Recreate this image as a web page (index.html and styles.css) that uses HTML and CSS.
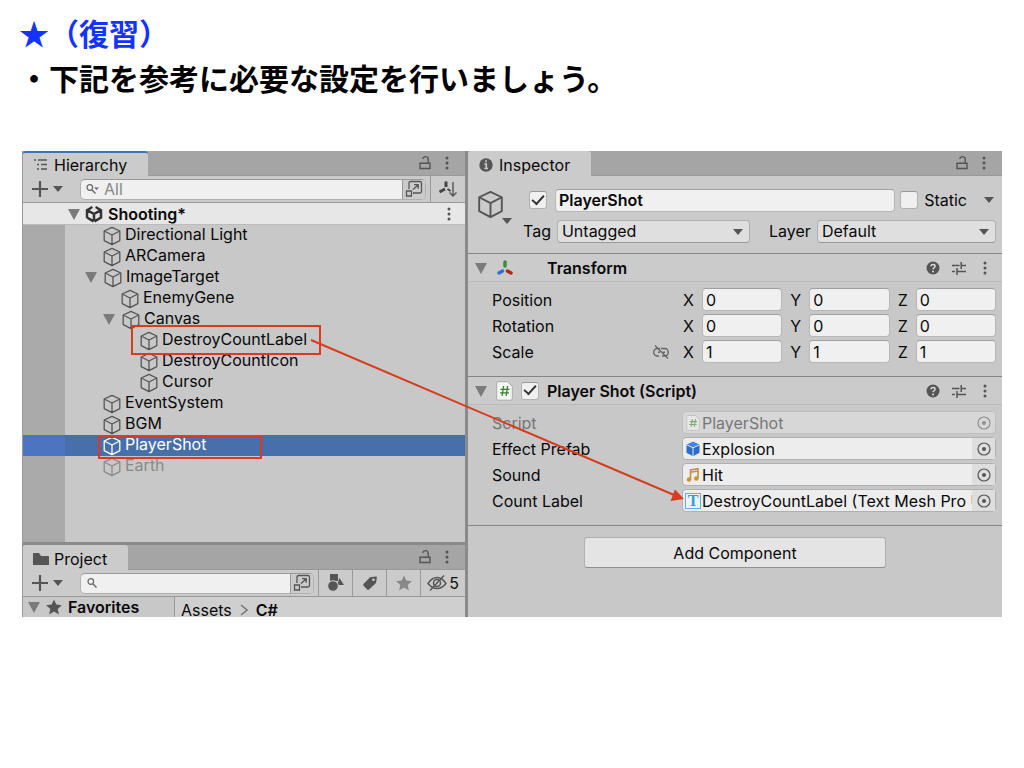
FILE: index.html
```html
<!DOCTYPE html>
<html lang="ja">
<head>
<meta charset="utf-8">
<title>復習</title>
<link rel="stylesheet" href="styles.css">
</head>
<body>
<svg class="defs" aria-hidden="true">
  <symbol id="cube" viewBox="0 0 20 20"><path d="M10 1.3 17.8 5v9.6L10 18.7 2.2 14.6V5zM2.2 5 10 9l7.8-4M10 9v9.7" fill="none" stroke="currentColor" stroke-width="1.3" stroke-linejoin="round"/></symbol>
  <symbol id="lock" viewBox="0 0 14 16"><path d="M2 8.2h10v5.3H2zM10.200 8V4.600a2.700 2.700 0 0 0-5.400-.6" fill="none" stroke="currentColor" stroke-width="1.400"/></symbol>
  <symbol id="dots" viewBox="0 0 6 16"><g fill="currentColor"><circle cx="3" cy="3" r="1.500"/><circle cx="3" cy="8" r="1.500"/><circle cx="3" cy="13" r="1.500"/></g></symbol>
  <symbol id="plus" viewBox="0 0 16 16"><path d="M8 0v16M0 8h16" stroke="currentColor" stroke-width="2.200"/></symbol>
  <symbol id="down" viewBox="0 0 12 8"><path d="M1 1h10L6 7z" fill="currentColor"/></symbol>
  <symbol id="fold" viewBox="0 0 12 12"><path d="M0 1h12L6 12z" fill="currentColor"/></symbol>
  <symbol id="expand" viewBox="0 0 18 18"><path d="M4 9V3q0-1.500 1.500-1.500h9.500q1.500 0 1.500 1.500v8.500q0 1.500-1.500 1.500H8M1.500 11h5v5h-5zM8 9.500 13 5M9 4.700h4.200v4" fill="none" stroke="currentColor" stroke-width="1.300"/></symbol>
  <symbol id="star" viewBox="0 0 16 16"><path d="m8 .5 2.300 5.100 5.500.6-4.100 3.700 1.200 5.500L8 12.600l-4.900 2.800 1.200-5.500L.2 6.200l5.500-.6z" fill="currentColor"/></symbol>
  <symbol id="help" viewBox="0 0 14 14"><circle cx="7" cy="7" r="6.500" fill="#555"/><path d="M5 5.300c.1-2.500 4.200-2.400 4.100 0C9.100 6.800 7 6.700 7 8.300" fill="none" stroke="#ddd" stroke-width="1.500"/><circle cx="7" cy="10.500" r="1" fill="#ddd"/></symbol>
  <symbol id="sliders" viewBox="0 0 14 14"><path d="M0 4.500h7.500M9 4.500h5M9.200 1v7M0 10.500h3M5.500 10.500H14M5 7v7" fill="none" stroke="currentColor" stroke-width="1.500"/></symbol>
  <symbol id="target" viewBox="0 0 14 14"><circle cx="7" cy="7" r="6" fill="none" stroke="currentColor" stroke-width="1.200"/><circle cx="7" cy="7" r="2" fill="currentColor"/></symbol>
  <symbol id="page" viewBox="0 0 17 20"><path d="M2 .7h9.500l4.800 4.600v12.400q0 1.500-1.500 1.500H2Q.7 19.200.7 17.700V2Q.7.7 2 .7z" fill="#f5f5f5" stroke="#aaa"/><path d="m7.600 5-1.500 10M11.600 5l-1.500 10M4.500 8.300h9M4 11.800h9" fill="none" stroke="#3a8030" stroke-width="1.300"/></symbol>
</svg>

<header class="heading">
  <h1>★（復習）</h1>
  <p>・下記を参考に必要な設定を行いましょう。</p>
</header>

<main class="editor">
  <div class="left">
    <section class="hierarchy">
      <div class="tabbar">
        <h2 class="tab active"><svg class="i16" viewBox="0 0 16 16"><path d="M1 3h2M5 3h9M4 7.500h2M8 7.500h6M4 12h2M8 12h6" stroke="#555" stroke-width="1.400"/></svg>Hierarchy</h2>
        <button class="icon" aria-label="Lock"><svg class="lock"><use href="#lock"/></svg></button>
        <button class="icon" aria-label="Menu"><svg class="dots"><use href="#dots"/></svg></button>
      </div>
      <div class="toolbar">
        <button class="icon add" aria-label="Create"><svg class="i16"><use href="#plus"/></svg><svg class="down"><use href="#down"/></svg></button>
        <div class="search">
          <svg class="glass" viewBox="0 0 14 12"><path d="m5.500 6.500 4 4" stroke="#666" stroke-width="1.400"/><circle cx="3.800" cy="4.500" r="2.800" fill="none" stroke="#666" stroke-width="1.200"/><path d="M8 4.500h5L10.500 7z" fill="#666"/></svg>
          <input type="text" placeholder="All" aria-label="Search hierarchy">
          <button class="icon expand" aria-label="Open search"><svg class="i18"><use href="#expand"/></svg></button>
        </div>
        <button class="icon cell sort" aria-label="Sort"><svg class="i20" viewBox="0 0 20 20"><path d="M8 2.500V8" stroke="#444" stroke-width="3"/><path d="M7 10 1.500 13" stroke="#444" stroke-width="3"/><path d="m9.500 10 3 2" stroke="#444" stroke-width="2"/><path d="M15 3v14M11.500 13.500 15 17l3.500-3.500" fill="none" stroke="#555" stroke-width="1.400"/></svg></button>
      </div>
      <div class="scene">
        <svg class="fold"><use href="#fold"/></svg>
        <svg class="i18" viewBox="0 0 18 18"><path d="M7.500 2.200 2 5.200v7.500M2 12.500l6.500 3.800M9.500 16.300l6.500-3.800V5.200L10.500 2.200M9 9v7.500M9 9 2.500 5.300M9 9l6.500-3.700" fill="none" stroke="#333" stroke-width="2.500"/><path d="m9 2.500 3.500 2L9 6.500l-3.500-2z" fill="#e6e6e6"/></svg>
        <strong>Shooting*</strong>
        <button class="icon" aria-label="Scene menu"><svg class="dots"><use href="#dots"/></svg></button>
      </div>
      <ul class="tree">
        <li><svg class="cube"><use href="#cube"/></svg>Directional Light</li>
        <li><svg class="cube"><use href="#cube"/></svg>ARCamera</li>
        <li class="open"><svg class="fold"><use href="#fold"/></svg><svg class="cube"><use href="#cube"/></svg>ImageTarget</li>
        <li class="level2"><svg class="cube"><use href="#cube"/></svg>EnemyGene</li>
        <li class="level2 open"><svg class="fold"><use href="#fold"/></svg><svg class="cube"><use href="#cube"/></svg>Canvas</li>
        <li class="level3"><svg class="cube"><use href="#cube"/></svg>DestroyCountLabel<span class="mark mark-label"></span></li>
        <li class="level3"><svg class="cube"><use href="#cube"/></svg>DestroyCountIcon</li>
        <li class="level3"><svg class="cube"><use href="#cube"/></svg>Cursor</li>
        <li><svg class="cube"><use href="#cube"/></svg>EventSystem</li>
        <li><svg class="cube"><use href="#cube"/></svg>BGM</li>
        <li class="selected"><svg class="cube"><use href="#cube"/></svg>PlayerShot<span class="mark mark-shot"></span></li>
        <li class="inactive"><svg class="cube"><use href="#cube"/></svg>Earth</li>
      </ul>
    </section>
    <section class="project">
      <div class="tabbar">
        <h2 class="tab"><svg class="i16" viewBox="0 0 16 16"><path d="M0 3q0-1 1-1h5l2 3h7q1 0 1 1v8H0z" fill="#555"/></svg>Project</h2>
        <button class="icon" aria-label="Lock"><svg class="lock"><use href="#lock"/></svg></button>
        <button class="icon" aria-label="Menu"><svg class="dots"><use href="#dots"/></svg></button>
      </div>
      <div class="toolbar">
        <button class="icon add" aria-label="Create"><svg class="i16"><use href="#plus"/></svg><svg class="down"><use href="#down"/></svg></button>
        <div class="search">
          <svg class="glass" viewBox="0 0 14 12"><path d="m6.500 6.500 4 4" stroke="#666" stroke-width="1.400"/><circle cx="4.800" cy="4.500" r="2.800" fill="none" stroke="#666" stroke-width="1.200"/></svg>
          <input type="text" aria-label="Search project">
          <button class="icon expand" aria-label="Open search"><svg class="i18"><use href="#expand"/></svg></button>
        </div>
        <button class="icon cell" aria-label="Filter by type"><svg class="i18" viewBox="0 0 18 18"><path d="M3 0h8v7H3zM12.500 4l4.500 7h-7z" fill="#555"/><circle cx="6" cy="12" r="5.300" fill="#555" stroke="#cbcbcb"/></svg></button>
        <button class="icon cell" aria-label="Filter by label"><svg class="i16" viewBox="0 0 16 16"><path d="M1.500 9 8 2.200 14 1.500q1 0 .9 1L14 8l-7 6.500q-1 .8-1.800 0L1.500 10.800q-.8-.9 0-1.800z" fill="#555"/><circle cx="11.500" cy="4.700" r="1.300" fill="#cbcbcb"/></svg></button>
        <button class="icon cell pale" aria-label="Favorite"><svg class="i16"><use href="#star"/></svg></button>
        <button class="icon cell hidden-count"><svg class="i20" viewBox="0 0 20 16"><path d="M1 8.500q4-6 9-6t9 6q-4 5-9 5t-9-5zM3 15.500 17 .5" fill="none" stroke="#555" stroke-width="1.400"/><circle cx="10" cy="8" r="3.500" fill="none" stroke="#555" stroke-width="1.500"/></svg>5</button>
      </div>
      <div class="browser">
        <div class="favorites"><svg class="fold"><use href="#fold"/></svg><svg class="i16"><use href="#star"/></svg><strong>Favorites</strong></div>
        <div class="crumbs"><span>Assets</span><svg class="chevron" viewBox="0 0 8 12"><path d="m1 1 6 5-6 5" fill="none" stroke="#777" stroke-width="1.500"/></svg><strong>C#</strong></div>
      </div>
    </section>
  </div>

  <section class="inspector">
    <div class="tabbar">
      <h2 class="tab"><svg class="i16" viewBox="0 0 16 16"><circle cx="8" cy="8" r="6.700" fill="#555"/><path d="M8 3.300v2M6.300 7H8.300v4.500M6.300 11.500h3.700" fill="none" stroke="#ccc" stroke-width="1.600"/></svg>Inspector</h2>
      <button class="icon" aria-label="Lock"><svg class="lock"><use href="#lock"/></svg></button>
      <button class="icon" aria-label="Menu"><svg class="dots"><use href="#dots"/></svg></button>
    </div>
    <div class="object">
      <div class="object-icon"><svg class="bigcube"><use href="#cube"/></svg><svg class="down"><use href="#down"/></svg></div>
      <div class="object-fields">
        <div class="line">
          <input type="checkbox" checked aria-label="Active">
          <input class="name" type="text" value="PlayerShot" aria-label="Name">
          <input type="checkbox" id="static"><label for="static">Static</label>
          <button class="icon static-menu" aria-label="Static options"><svg class="down"><use href="#down"/></svg></button>
        </div>
        <div class="line">
          <label for="tag">Tag</label><span class="select tag"><select id="tag"><option>Untagged</option></select></span>
          <label class="layer-label" for="layer">Layer</label><span class="select layer"><select id="layer"><option>Default</option></select></span>
        </div>
      </div>
    </div>
    <section class="component">
      <div class="component-head">
        <svg class="fold"><use href="#fold"/></svg>
        <svg class="i18" viewBox="0 0 18 18"><g stroke-width="3.500" stroke-linecap="round"><path d="M9 3v4" stroke="#3b8b3b"/><path d="M6.500 12 3 14" stroke="#2f6fd0"/><path d="m11.500 12 3.500 2" stroke="#b3261c"/></g></svg>
        <h3>Transform</h3>
        <button class="icon" aria-label="Help"><svg class="i14"><use href="#help"/></svg></button>
        <button class="icon" aria-label="Presets"><svg class="i14"><use href="#sliders"/></svg></button>
        <button class="icon" aria-label="Menu"><svg class="dots"><use href="#dots"/></svg></button>
      </div>
      <div class="rows">
        <div class="row"><span>Position</span><div class="vector"><label for="px">X</label><input id="px" type="text" value="0"><label for="py">Y</label><input id="py" type="text" value="0"><label for="pz">Z</label><input id="pz" type="text" value="0"></div></div>
        <div class="row"><span>Rotation</span><div class="vector"><label for="rx">X</label><input id="rx" type="text" value="0"><label for="ry">Y</label><input id="ry" type="text" value="0"><label for="rz">Z</label><input id="rz" type="text" value="0"></div></div>
        <div class="row"><span class="scale">Scale<svg class="i18" viewBox="0 0 18 18"><path d="M8 5.500H5.500a3.700 3.700 0 0 0 0 7.500H7M10 13h2.500a3.700 3.700 0 0 0 0-7.500H9M6 9.200h2M11 9.200h2M3 2.500l13 13" fill="none" stroke="#666" stroke-width="1.400"/></svg></span><div class="vector"><label for="sx">X</label><input id="sx" type="text" value="1"><label for="sy">Y</label><input id="sy" type="text" value="1"><label for="sz">Z</label><input id="sz" type="text" value="1"></div></div>
      </div>
    </section>
    <section class="component script">
      <div class="component-head">
        <svg class="fold"><use href="#fold"/></svg>
        <svg class="page"><use href="#page"/></svg>
        <input type="checkbox" checked aria-label="Player Shot enabled">
        <h3>Player Shot (Script)</h3>
        <button class="icon" aria-label="Help"><svg class="i14"><use href="#help"/></svg></button>
        <button class="icon" aria-label="Presets"><svg class="i14"><use href="#sliders"/></svg></button>
        <button class="icon" aria-label="Menu"><svg class="dots"><use href="#dots"/></svg></button>
      </div>
      <div class="rows">
        <div class="row disabled"><span>Script</span><div class="object-field"><svg class="i16" viewBox="0 0 17 20"><use href="#page" width="17" height="20"/></svg><span class="value">PlayerShot</span><button class="icon pick" disabled aria-label="Pick script"><svg class="i14"><use href="#target"/></svg></button></div></div>
        <div class="row"><span>Effect Prefab</span><div class="object-field"><svg class="i16" viewBox="0 0 16 16"><path d="m8 .8 6.500 3v8L8 15.300l-6.500-3.500v-8z" fill="#2d6bc9"/><path d="m8 .8 6.500 3L8 7 1.500 3.800z" fill="#4784dc"/><path d="m1.500 3.800 6.500 3 6.500-3M8 7v8" fill="none" stroke="#d7e7ff"/></svg><span class="value">Explosion</span><button class="icon pick" aria-label="Pick prefab"><svg class="i14"><use href="#target"/></svg></button></div></div>
        <div class="row"><span>Sound</span><div class="object-field"><svg class="i16" viewBox="0 0 16 16"><path d="M5.500 12.500V3l7.500-1.200v9.500M5.500 5.200 13 4" fill="none" stroke="#c4952f" stroke-width="1.600"/><circle cx="4" cy="12.500" r="2.200" fill="#c4952f"/><circle cx="11.300" cy="11.500" r="2.200" fill="#c4952f"/></svg><span class="value">Hit</span><button class="icon pick" aria-label="Pick sound"><svg class="i14"><use href="#target"/></svg></button></div></div>
        <div class="row"><span>Count Label</span><div class="object-field"><span class="text-icon">T</span><span class="value">DestroyCountLabel (Text Mesh Pro UGUI)</span><button class="icon pick" aria-label="Pick label"><svg class="i14"><use href="#target"/></svg></button></div></div>
      </div>
    </section>
    <div class="footer"><button class="add-component">Add Component</button></div>
  </section>

  <svg class="arrow" viewBox="0 0 980 466" aria-hidden="true"><path d="M289 189 652 344" stroke="#d73c1e" stroke-width="2"/><path d="m662 348-13.500 2L653 338.500z" fill="#d73c1e"/></svg>
</main>
</body>
</html>
```
FILE: styles.css
```css
* { box-sizing: border-box; }
body { margin: 0; background: #fff; color: #090909; font: 16px/20px Inter, "Liberation Sans", sans-serif; }
h1, h2, h3, p, ul { margin: 0; padding: 0; }
svg { display: block; flex: none; }
button, input, select { font: inherit; color: inherit; }
.defs { position: absolute; width: 0; height: 0; }

.heading { padding: 10px 19px 51px; font-family: "Noto Sans CJK JP", sans-serif; }
.heading h1, .heading p { font-size: 30px; line-height: 45px; font-weight: 700; color: #000; }
.heading h1 { color: #1433ff; }

.i14 { width: 14px; height: 14px; }
.i16 { width: 16px; height: 16px; }
.i18 { width: 18px; height: 18px; }
.i20 { width: 20px; height: 20px; }
.lock { width: 14px; height: 16px; }
.dots { width: 6px; height: 16px; }
.down { width: 12px; height: 8px; }
.fold { width: 12px; height: 12px; color: #7b7b7b; }
.cube { width: 20px; height: 20px; color: #555; }
.page { width: 17px; height: 20px; }
.icon { display: flex; align-items: center; justify-content: center; padding: 0; border: 0; background: none; color: #555; }

.editor { position: relative; display: grid; grid-template-columns: 443fr 534fr; gap: 3px; margin: 0 22px; background: #8a8a8a; }
.left { display: flex; flex-direction: column; gap: 3px; min-width: 0; border-left: 1px solid #999; }
.hierarchy, .project, .inspector { display: flex; flex-direction: column; min-width: 0; background: #c8c8c8; }
.hierarchy { flex: 1; }

.tabbar { display: flex; align-items: center; height: 25px; padding-right: 15px; background: #a5a5a5; border-bottom: 1px solid #999; }
.tab { display: flex; align-items: center; gap: 5px; height: 25px; margin: 0 auto -1px 0; padding: 2px 21px 0 10px; background: #cbcbcb; border-radius: 3px 3px 0 0; font-size: 16px; font-weight: 400; }
.tab.active { padding-top: 0; border-top: 2px solid #3d72b4; }
.tabbar .lock { margin-right: 12px; }

.toolbar { display: flex; align-items: center; height: 27px; background: #cbcbcb; border-bottom: 1px solid #999; }
.add { gap: 4px; padding: 0 18px 0 9px; }
.search { display: flex; align-items: center; flex: 1; min-width: 0; height: 21px; margin: 0 4px 0 -2px; border: 1px solid #b0b0b0; border-top-color: #999; border-radius: 5px; background: #f0f0f0; overflow: hidden; }
.glass { width: 14px; height: 12px; margin-left: 5px; }
.search input { flex: 1; width: 0; min-width: 0; padding: 0 4px; border: 0; background: none; outline: 0; }
.search input::placeholder { color: #888; }
.expand { width: 23px; height: 21px; background: #cbcbcb; border-left: 1px solid #999; }
.cell { width: 34px; height: 26px; border-left: 1px solid #999; }
.sort { width: 35px; }
.hidden-count { gap: 2px; width: 45px; color: #111; }
.pale { color: #888; }

.scene { display: flex; align-items: center; gap: 5px; height: 22px; padding: 0 13px 0 45px; background: #e7e7e7; border-bottom: 1px solid #bbb; }
.scene strong { flex: 1; font-weight: 600; }
.tree { flex: 1; padding-bottom: 65px; list-style: none; background: linear-gradient(to right, #aaa 42px, #c8c8c8 42px); }
.tree li { position: relative; display: flex; align-items: center; gap: 3px; height: 21px; padding: 0 0 3px 79px; }
.tree .cube { margin-top: 3px; }
.tree .fold { margin: 2px 3px 0 -17px; }
.tree .level2 { padding-left: 97px; }
.tree .level3 { padding-left: 116px; }
.tree .selected { color: #fff; background: linear-gradient(to right, #4d74c0 42px, #476fab 42px); }
.tree .selected .cube { color: #fff; }
.tree .inactive, .tree .inactive .cube { color: #8a8a8a; }
.mark { position: absolute; border: 2px solid #d73c1e; z-index: 1; }
.mark-label { left: 108px; top: -5px; width: 190px; height: 30px; }
.mark-shot { left: 75px; top: 1px; width: 164px; height: 23px; }

.browser { display: grid; grid-template: 20px / 152px 1fr; overflow: hidden; background: #cfcfcf; }
.favorites { display: flex; align-items: center; gap: 6px; padding-left: 5px; border-right: 1px solid #999; background: #c8c8c8; color: #555; }
.favorites strong { color: #090909; font-weight: 600; }
.crumbs { display: flex; align-items: center; gap: 8px; height: 20px; padding: 6px 0 0 6px; }
.crumbs strong { font-weight: 600; }
.chevron { width: 8px; height: 12px; }

.inspector input[type="text"] { min-width: 0; height: 23px; padding: 0 3px; border: 1px solid #b7b7b7; border-top-color: #a0a0a0; border-radius: 4px; background: #f0f0f0; outline: 0; }
.inspector input[type="checkbox"] { appearance: none; display: grid; place-items: center; flex: none; width: 18px; height: 18px; margin: 0; border: 1px solid #b2b2b2; border-top-color: #999; border-radius: 3px; background: #f0f0f0; }
.inspector input[type="checkbox"]:checked::before { content: ""; width: 10px; height: 5px; margin-top: -4px; border: solid #333; border-width: 0 0 2px 2px; transform: rotate(-48deg); }
.object { display: flex; padding: 12px 6px 10px 8px; background: #cbcbcb; }
.object-icon { display: flex; flex-direction: column; width: 36px; margin-right: 17px; }
.object-icon .down { margin: -3px 0 0 25px; color: #555; }
.bigcube { width: 29px; height: 31px; margin-top: 1px; color: #555; }
.object-fields { display: flex; flex-direction: column; gap: 7px; flex: 1; min-width: 0; }
.line { display: flex; align-items: center; height: 24px; }
.line .name { flex: 1; margin: 0 5px 0 8px; padding-left: 2px; font-weight: 600; }
.line label { margin-left: 6px; }
.static-menu { margin-left: 15px; padding: 0 1px; }
.line:last-child label { margin: 0 6px 0 -6px; }
.line:last-child .layer-label { margin-left: 19px; }
.select { position: relative; flex: 193; display: flex; min-width: 0; }
.layer { flex-grow: 179; }
.select::after { content: ""; position: absolute; right: 7px; top: 9px; border: 5px solid transparent; border-top: 6px solid #555; border-bottom: 0; pointer-events: none; }
select { appearance: none; width: 100%; height: 23px; padding: 0 4px; border: 1px solid #b0b0b0; border-bottom-color: #999; border-radius: 4px; background: #dfdfdf; }

.component { border-top: 1px solid #858585; }
.component-head { display: flex; align-items: center; height: 28px; padding: 0 14px 0 7px; background: #cbcbcb; border-bottom: 1px solid #bababa; }
.component-head h3 { flex: 1; margin-left: 33px; font-size: 16px; font-weight: 600; }
.component-head .fold { margin-right: 9px; }
.component-head .icon { margin-left: 12px; }
.component-head .icon:last-child { margin-left: 16px; }
.script .page { margin-right: 8px; }
.script h3 { margin-left: 8px; }
.rows { display: flex; flex-direction: column; gap: 3px; padding: 6px 6px 13px 24px; }
.row { display: grid; grid-template-columns: 190px 1fr; align-items: center; height: 23px; }
.vector { display: grid; grid-template-columns: 20px 1fr 27px 1fr 26px 1fr; align-items: center; }
.vector label { padding-left: 8px; }
.vector label:first-child { padding-left: 1px; }
.vector input { width: 100%; }
.scale { display: flex; justify-content: space-between; align-items: center; padding-right: 12px; }
.object-field { display: flex; align-items: center; gap: 1px; min-width: 0; height: 23px; padding-left: 2px; border: 1px solid #b0b0b0; border-radius: 4px; background: #ededed; }
.value { flex: 1; min-width: 0; overflow: hidden; white-space: nowrap; }
.pick { flex: none; width: 23px; height: 21px; margin-left: -1px; background: #dedede; }
.disabled { color: #777; }
.disabled .object-field { background: #d7d7d7; border-color: #c0c0c0; }
.disabled svg { opacity: .55; }
.disabled .pick { background: none; }
.text-icon { width: 16px; height: 16px; border: 1px solid #65aee0; background: #e8f5fc; color: #349bdc; font: 700 16px/14px "Liberation Serif", serif; text-align: center; }
.footer { display: flex; justify-content: center; flex: 1; align-items: flex-start; padding: 11px 0 48px; border-top: 1px solid #858585; }
.add-component { width: 302px; height: 31px; padding: 0; border: 1px solid #b0b0b0; border-bottom-color: #909090; border-radius: 3px; background: #e4e4e4; }
.arrow { position: absolute; inset: 0; width: 100%; height: 100%; pointer-events: none; z-index: 2; }
```
